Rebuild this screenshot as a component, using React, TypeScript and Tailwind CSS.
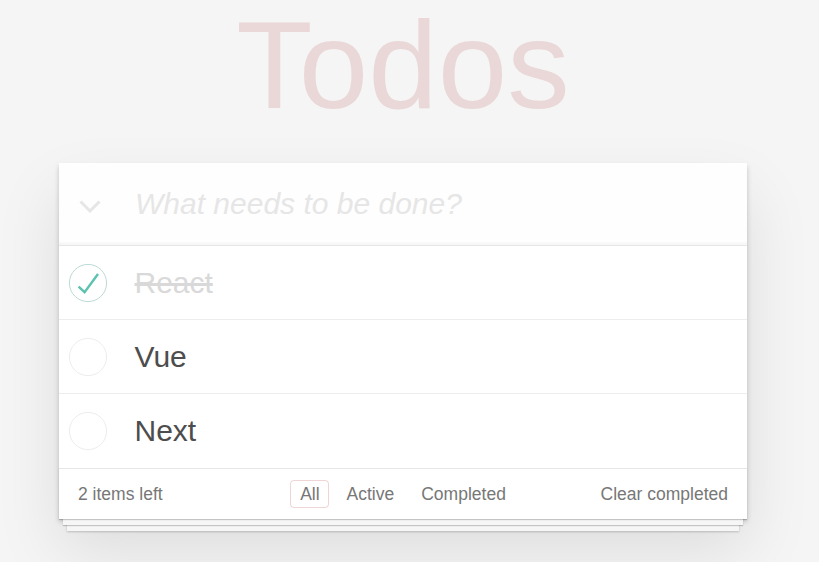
import { useState } from "react";

type Todo = {
  id: number;
  title: string;
  completed: boolean;
};

const initialTodos: Todo[] = [
  { id: 1, title: "React", completed: true },
  { id: 2, title: "Vue", completed: false },
  { id: 3, title: "Next", completed: false },
];

const filters = ["All", "Active", "Completed"] as const;
type Filter = (typeof filters)[number];

const ToggleCircle = ({ checked }: { checked: boolean }) => (
  <svg width="40" height="40" viewBox="0 0 40 40" className="shrink-0">
    <circle
      cx="20"
      cy="20"
      r="18.6"
      fill="none"
      stroke={checked ? "#bddad5" : "#ededed"}
      strokeWidth="1"
    />
    {checked && (
      <polyline
        points="10.6,23.6 16.6,29.2 30,11"
        fill="none"
        stroke="#5dc2af"
        strokeWidth="2.4"
      />
    )}
  </svg>
);

export default function App() {
  const [todos, setTodos] = useState<Todo[]>(initialTodos);
  const [filter, setFilter] = useState<Filter>("All");
  const [draft, setDraft] = useState("");

  const left = todos.filter((t) => !t.completed).length;
  const visible = todos.filter((t) =>
    filter === "All" ? true : filter === "Active" ? !t.completed : t.completed,
  );

  const toggle = (id: number) =>
    setTodos((all) =>
      all.map((t) => (t.id === id ? { ...t, completed: !t.completed } : t)),
    );

  return (
    <div className="min-h-screen bg-[#f5f5f5] font-['Liberation_Sans',Arial,sans-serif] antialiased">
      <div className="ml-[59px] w-[688px] flex flex-col">
        <h1 className="text-center text-[125px] leading-[130px] font-thin text-[rgba(175,47,47,0.15)]">
          Todos
        </h1>

        <section className="mt-[33px] bg-white shadow-[0_2.5px_5px_rgba(0,0,0,0.2),0_31px_62px_rgba(0,0,0,0.1)]">
          <header className="flex items-center h-[82px] bg-[rgba(0,0,0,0.003)] shadow-[inset_0_-2.5px_1.25px_rgba(0,0,0,0.03)]">
            <div className="w-[75px] shrink-0 flex items-center pl-[20px] pt-[4px]">
              <svg width="22" height="13" viewBox="0 0 22 13">
                <polyline
                  points="1.5,1.5 11,11 20.5,1.5"
                  fill="none"
                  stroke="#e6e6e6"
                  strokeWidth="3"
                />
              </svg>
            </div>
            <input
              value={draft}
              onChange={(e) => setDraft(e.target.value)}
              onKeyDown={(e) => {
                if (e.key === "Enter" && draft.trim()) {
                  setTodos((all) => [
                    ...all,
                    { id: Date.now(), title: draft.trim(), completed: false },
                  ]);
                  setDraft("");
                }
              }}
              placeholder="What needs to be done?"
              className="flex-1 min-w-0 h-full pl-[1px] pr-[20px] text-[30px] leading-[42px] text-[#4d4d4d] bg-transparent outline-none placeholder:italic placeholder:text-[#e6e6e6]"
            />
          </header>

          <ul className="border-t border-[#e6e6e6]">
            {visible.map((todo, i) => (
              <li
                key={todo.id}
                className={
                  "flex items-center h-[74px] " +
                  (i < visible.length - 1 ? "border-b border-[#ededed]" : "")
                }
              >
                <button
                  className="ml-[8.5px] mr-[27px] flex items-center"
                  onClick={() => toggle(todo.id)}
                >
                  <ToggleCircle checked={todo.completed} />
                </button>
                <label
                  className={
                    todo.completed
                      ? "text-[30px] leading-[36px] text-[#d9d9d9] line-through"
                      : "text-[30px] leading-[36px] text-[#4d4d4d]"
                  }
                >
                  {todo.title}
                </label>
              </li>
            ))}
          </ul>

          <footer className="grid grid-cols-[1fr_auto_1fr] items-center h-[51px] px-[19px] border-t border-[#e6e6e6] text-[17.5px] leading-[20px] text-[#777] shadow-[0_1px_1px_rgba(0,0,0,0.2),0_10px_0_-4px_#f6f6f6,0_11px_1px_-4px_rgba(0,0,0,0.2),0_20px_0_-8px_#f6f6f6,0_21px_2px_-8px_rgba(0,0,0,0.2)]">
            <span>
              {left} {left === 1 ? "item" : "items"} left
            </span>
            <ul className="flex">
              {filters.map((f) => (
                <li key={f}>
                  <button
                    onClick={() => setFilter(f)}
                    className={
                      "mx-[3.75px] px-[8.75px] py-[3px] rounded-[3.75px] border " +
                      (filter === f
                        ? "border-[rgba(175,47,47,0.2)]"
                        : "border-transparent")
                    }
                  >
                    {f}
                  </button>
                </li>
              ))}
            </ul>
            <button
              className="justify-self-end"
              onClick={() => setTodos((all) => all.filter((t) => !t.completed))}
            >
              Clear completed
            </button>
          </footer>
        </section>
      </div>
    </div>
  );
}
